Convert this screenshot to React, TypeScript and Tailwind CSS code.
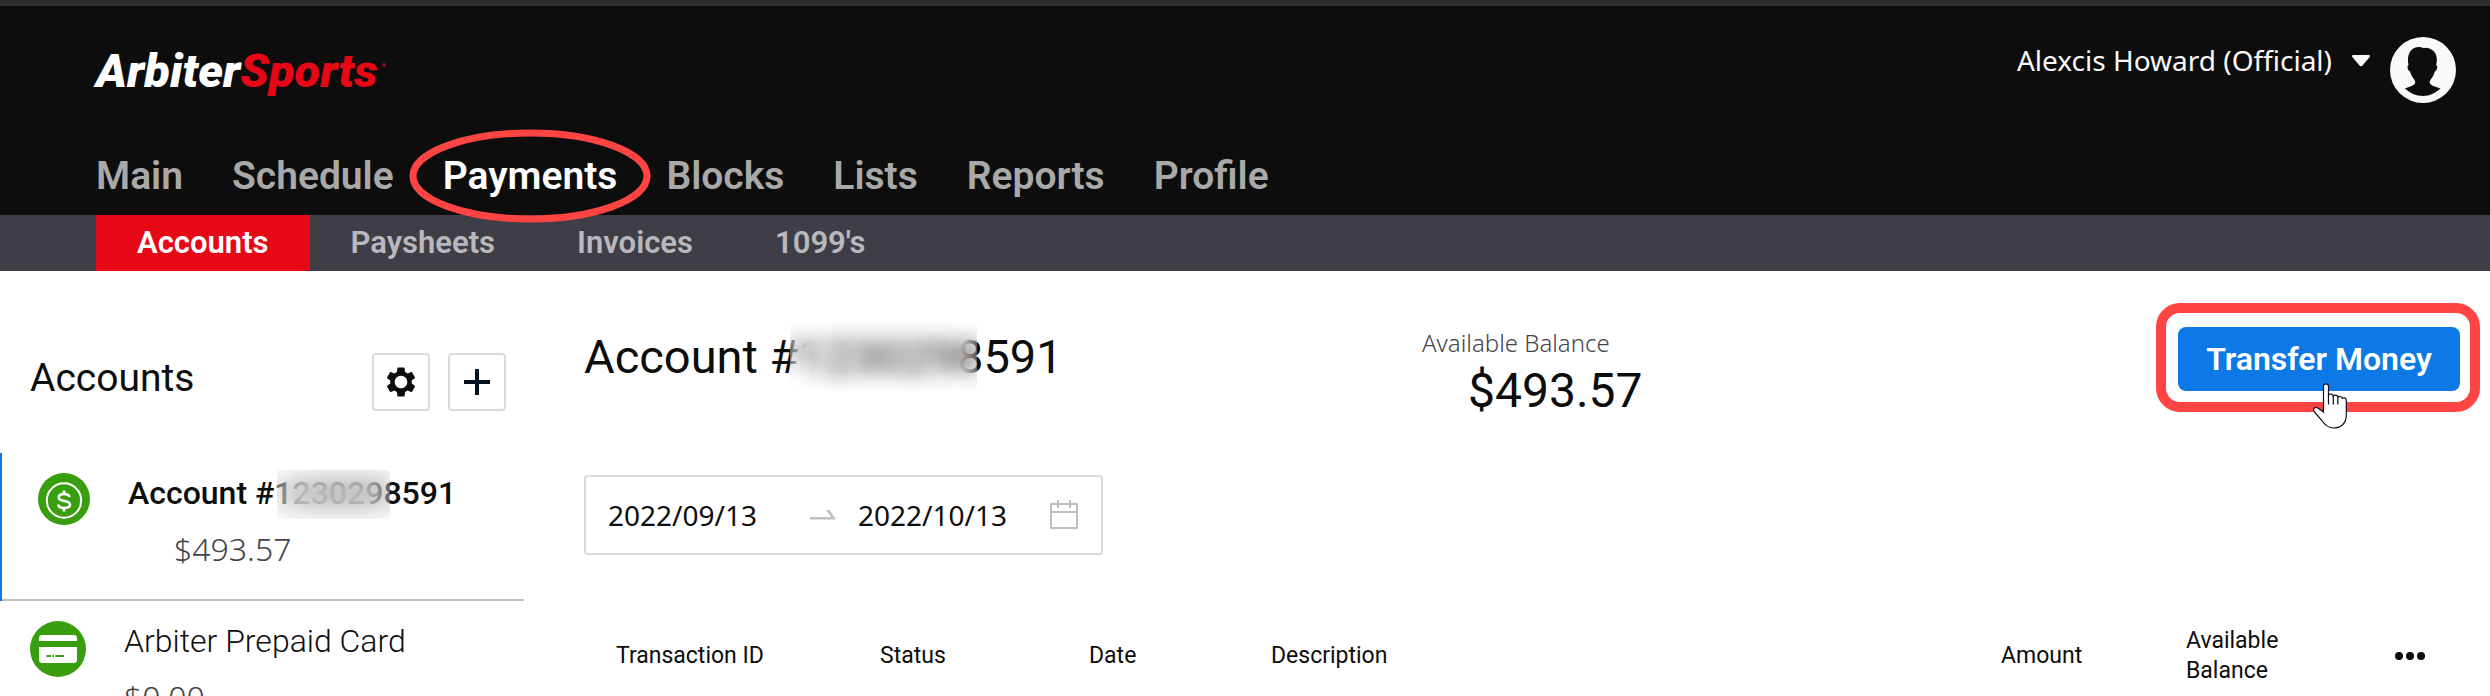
import type { ReactNode } from 'react';

const NAV = ['Main', 'Schedule', 'Payments', 'Blocks', 'Lists', 'Reports', 'Profile'];
const TABS = ['Accounts', 'Paysheets', 'Invoices', "1099's"];

function Logo() {
  return (
    <a href="#home" className="flex pt-1.5 text-[47px] leading-[56px] font-black text-white italic">
      Arbiter<span className="text-[#e60817]">Sports</span>
      <span className="mt-5 ml-1 size-1 rounded-full bg-[#8c1018]" />
    </a>
  );
}

function Avatar() {
  return (
    <svg viewBox="0 0 66 66" className="size-[66px]" aria-hidden="true">
      <circle cx="33" cy="33" r="33" fill="#fafafa" />
      <path
        d="M15 51.500c3-1.500 8-2 10-5 .8-1.500-.3-3.500-1.500-5-1.800-2.200-2.800-4.500-3.400-7-1.800-.6-2.600-3-2.600-4.500 0-1 .4-1.500 1-1.800-1-5-.8-10 1.500-13.500 2.500-3.800 6.500-5 10-4.700 1.500.1 2.300.6 3.500 1.300 1-.6 3.500-.8 6 .3 4 1.700 7 5 7.300 10 .1 2.500-.2 4.500-.6 6.600.8.3 1.100 1 1.100 1.900 0 1.600-.8 3.900-2.500 4.400-.6 2.500-1.800 5-3.600 7.200-1.200 1.500-2 3.300-1.200 4.800 2 3 7 3.500 10.500 5C46 55.500 40 59 33 59s-13.500-3-18-7.500z"
        fill="#0d0d0d"
      />
    </svg>
  );
}

function MainNav() {
  return (
    <nav
      aria-label="Main"
      className="flex gap-[49px] px-24 pb-3.5 text-[39px] leading-[50px] font-semibold text-[#a9a9a9]"
    >
      {NAV.map((item) =>
        item === 'Payments' ? (
          <a key={item} href="#payments" aria-current="page" className="relative text-white">
            {item}
            <svg
              viewBox="0 0 242 94"
              className="pointer-events-none absolute -top-[22px] left-1/2 h-[94px] w-[242px] -translate-x-1/2"
              aria-hidden="true"
            >
              <ellipse cx="121" cy="47" rx="117" ry="43" fill="none" stroke="#ff4444" strokeWidth="7" />
            </svg>
          </a>
        ) : (
          <a key={item} href={`#${item.toLowerCase()}`}>
            {item}
          </a>
        ),
      )}
    </nav>
  );
}

function SubNav() {
  return (
    <nav aria-label="Payments" className="flex bg-[#3f3e47] px-24 text-[31px] leading-[56px] font-semibold">
      {TABS.map((tab, i) => (
        <a
          key={tab}
          href={`#${tab.toLowerCase()}`}
          className={i === 0 ? 'bg-[#e60817] px-[41px] text-white' : 'px-[41px] text-[#b9b9bd]'}
        >
          {tab}
        </a>
      ))}
    </nav>
  );
}

function Header() {
  return (
    <header className="border-t-[6px] border-[#2e2e2e] bg-[#0d0d0d]">
      <div className="flex items-start justify-between pt-[31px] pr-[34px] pb-12 pl-24">
        <Logo />
        <button
          type="button"
          className="flex items-start gap-5 font-['Noto_Sans'] text-[28px] leading-[46px] text-[#fafafa]"
        >
          <span>Alexcis Howard (Official)</span>
          <svg viewBox="0 0 18 12" className="mt-[18px] h-3 w-[18px]" aria-hidden="true">
            <path d="M1.500 0h15c1.400 0 1.900 1.300 1 2.300l-7 8.200c-.9 1-2.100 1-3 0l-7-8.200C-.4 1.300.1 0 1.500 0z" fill="currentColor" />
          </svg>
          <Avatar />
        </button>
      </div>
      <MainNav />
      <SubNav />
    </header>
  );
}

function GearIcon() {
  return (
    <svg viewBox="0 0 24 24" className="size-9" fill="#0d0d0d" aria-hidden="true">
      <path d="M19.140 12.940c.04-.3.06-.61.06-.94 0-.32-.02-.64-.07-.94l2.030-1.580c.18-.14.23-.41.12-.61l-1.920-3.320c-.12-.22-.37-.29-.59-.22l-2.390.96c-.5-.38-1.030-.7-1.620-.94l-.36-2.540c-.04-.24-.24-.41-.48-.41h-3.840c-.24 0-.43.17-.47.41l-.36 2.540c-.59.24-1.130.57-1.620.94l-2.390-.96c-.22-.08-.47 0-.59.22L2.740 8.870c-.12.21-.08.47.12.61l2.030 1.580c-.05.3-.09.63-.09.94s.02.64.07.94l-2.030 1.580c-.18.14-.23.41-.12.61l1.920 3.320c.12.22.37.29.59.22l2.390-.96c.5.38 1.030.7 1.620.94l.36 2.540c.05.24.24.41.48.41h3.840c.24 0 .44-.17.47-.41l.36-2.540c.59-.24 1.130-.56 1.620-.94l2.390.96c.22.08.47 0 .59-.22l1.920-3.320c.12-.22.07-.47-.12-.61l-2.010-1.580zM12 16.200c-2.300 0-4.200-1.900-4.200-4.200s1.900-4.200 4.200-4.200 4.200 1.900 4.200 4.200-1.900 4.200-4.200 4.200z" />
    </svg>
  );
}

function PlusIcon() {
  return (
    <svg viewBox="0 0 26 26" className="size-[26px]" stroke="#00101f" strokeWidth="4" aria-hidden="true">
      <path d="M13 0v26M0 13h26" />
    </svg>
  );
}

function CoinIcon() {
  return (
    <svg viewBox="0 0 52 52" className="size-[52px]" fill="none" stroke="#fff" aria-hidden="true">
      <circle cx="26" cy="26" r="26" fill="#389e0d" stroke="none" />
      <circle cx="26" cy="27.500" r="17.200" strokeWidth="2" />
      <path d="M26 17.500v4M26 34.500v4M31.500 24c-.4-2-2.500-3-5.500-3-3.200 0-5.300 1.300-5.300 3.500 0 5 11.300 2 11.300 7 0 2.200-2.400 3.500-5.800 3.500-3.400 0-5.700-1.300-6-3.500" strokeWidth="2.600" />
    </svg>
  );
}

function CardIcon() {
  return (
    <svg viewBox="0 0 56 56" className="size-14" aria-hidden="true">
      <circle cx="28" cy="28" r="28" fill="#389e0d" />
      <path d="M12 14h32c1.700 0 3 1.300 3 3v3H9v-3c0-1.700 1.300-3 3-3zM9 26h38v13c0 1.700-1.300 3-3 3H12c-1.700 0-3-1.300-3-3z" fill="#fff" />
      <path d="M16.500 35h4.500M22.500 35h1.500M25.500 35h8.500" stroke="#389e0d" strokeWidth="2" />
    </svg>
  );
}

function CalendarIcon() {
  return (
    <svg viewBox="0 0 30 30" className="size-[30px] shrink-0" fill="none" stroke="#bfbfbf" strokeWidth="2" aria-hidden="true">
      <path d="M2 4h26v24H2zM2 12h26M9 0v8M21 0v8" />
    </svg>
  );
}

/** Digits of an account number, blurred by the mask on top of them. */
function MaskedDigits({ children, mask }: { children: ReactNode; mask: string }) {
  return (
    <span className="relative">
      {children}
      <span className={mask} />
    </span>
  );
}

function SquareButton({ label, children }: { label: string; children: ReactNode }) {
  return (
    <button
      type="button"
      aria-label={label}
      className="flex size-[58px] items-center justify-center rounded border-2 border-[#d9d9d9] bg-white"
    >
      {children}
    </button>
  );
}

function Sidebar() {
  return (
    <aside className="w-[524px] shrink-0 pt-[82px]">
      <div className="flex items-start gap-[18px] pr-[18px] pl-[30px]">
        <h2 className="mr-auto text-[39px] leading-[50px]">Accounts</h2>
        <SquareButton label="Settings">
          <GearIcon />
        </SquareButton>
        <SquareButton label="Add account">
          <PlusIcon />
        </SquareButton>
      </div>

      <ul className="mt-[42px] text-[32px] leading-10">
        <li className="border-b-2 border-[#bfbfbf]">
          <a href="#account" className="-mb-0.5 flex h-[148px] gap-[38px] border-l-2 border-[#0d79e6] pt-5 pl-9">
            <CoinIcon />
            <div>
              <p className="font-medium">
                Account #
                <MaskedDigits mask="absolute -top-1 right-3 h-[49px] w-[113px] backdrop-blur-[14px]">
                  1230298
                </MaskedDigits>
                591
              </p>
              <p className="mt-4 pl-[46px] font-['Noto_Sans'] font-light text-[#434349]">$493.57</p>
            </div>
          </a>
        </li>
        <li>
          <a href="#prepaid" className="flex gap-[38px] pt-5 pl-[30px]">
            <CardIcon />
            <div>
              <p className="font-light">Arbiter Prepaid Card</p>
              <p className="mt-4 font-['Noto_Sans'] font-light text-[#434349]">$0.00</p>
            </div>
          </a>
        </li>
      </ul>
    </aside>
  );
}

function HandCursor() {
  return (
    <svg viewBox="0 0 34 46" className="pointer-events-none absolute top-14 left-[135px] h-[46px] w-[34px]" aria-hidden="true">
      <path
        d="M10.500 29V3.500C10.500 0 15.500 0 15.500 3.500V12c1.200-1.600 4.200-1.300 4.800 1 1.400-1.500 4-1 4.500 1 1.600-1.300 3.700-.6 4.500 1.300 2-1.200 4 0 4 2.200V32c0 8-5 13-12.500 13C14 45 11 41 8.500 37L1.500 29C-.8 26 2 23.200 4.800 25z"
        fill="#fff"
        stroke="#0d1020"
        strokeWidth="1.200"
      />
      <path d="M15.500 11v10.500M20.300 13v8.500M24.800 14v7.500" stroke="#0d1020" strokeWidth="1.200" fill="none" />
    </svg>
  );
}

function DateRange() {
  const input = "w-[202px] bg-transparent font-['Noto_Sans'] text-[28px] leading-9 outline-none";
  return (
    <div className="mt-14 flex h-20 w-[519px] items-center rounded border-2 border-[#d9d9d9] px-[22px]">
      <input aria-label="Start date" defaultValue="2022/09/13" className={input} />
      <svg viewBox="0 0 26 10" className="h-[10px] w-[26px] shrink-0" aria-hidden="true">
        <path d="M0 7h21l-5-7h3.500L26 9.500H0z" fill="#bfbfbf" />
      </svg>
      <input aria-label="End date" defaultValue="2022/10/13" className={`${input} ml-[22px] min-w-0 flex-1`} />
      <CalendarIcon />
    </div>
  );
}

function Transactions() {
  return (
    <table className="mt-[71px] w-full table-fixed text-left text-[23px] leading-[30px]">
      <thead>
        <tr className="*:pl-8 *:font-normal">
          <th scope="col" className="w-[264px]">Transaction ID</th>
          <th scope="col" className="w-[209px]">Status</th>
          <th scope="col" className="w-[182px]">Date</th>
          <th scope="col">Description</th>
          <th scope="col" className="w-[185px]">Amount</th>
          <th scope="col" className="w-[209px] pr-16">Available Balance</th>
          <th scope="col" className="w-[127px]">
            <button type="button" aria-label="More" className="block">
              <svg viewBox="0 0 30 8" className="h-2 w-[30px]" fill="#0d0d0d" aria-hidden="true">
                <circle cx="4" cy="4" r="4" />
                <circle cx="15" cy="4" r="4" />
                <circle cx="26" cy="4" r="4" />
              </svg>
            </button>
          </th>
        </tr>
      </thead>
    </table>
  );
}

export default function App() {
  return (
    <div className="h-screen overflow-hidden bg-white font-['Roboto',sans-serif] text-[#0d0d0d]">
      <Header />
      <div className="flex">
        <Sidebar />
        <main className="min-w-0 flex-1 pt-14 pl-[60px]">
          <div className="grid grid-cols-[838px_1fr_auto] items-start pr-[30px]">
            <h1 className="text-[47px] leading-[60px]">
              Account #
              <MaskedDigits mask="absolute -top-2 right-1.5 h-[70px] w-[187px] backdrop-blur-[10px]">
                1230298
              </MaskedDigits>
              591
            </h1>
            <div>
              <p className="font-['Noto_Sans'] text-2xl leading-8 font-light text-[#434349]">Available Balance</p>
              <p className="mt-1 pl-[46px] text-[48px] leading-[56px]">$493.57</p>
            </div>
            <div className="relative">
              <button
                type="button"
                className="h-16 w-[282px] rounded-lg bg-[#0d79e6] text-[32px] leading-10 font-semibold text-white"
              >
                Transfer Money
              </button>
              <div className="pointer-events-none absolute -top-6 -right-5 -left-[22px] h-[109px] rounded-3xl border-10 border-[#ff4444]" />
              <HandCursor />
            </div>
          </div>
          <DateRange />
          <Transactions />
        </main>
      </div>
    </div>
  );
}
